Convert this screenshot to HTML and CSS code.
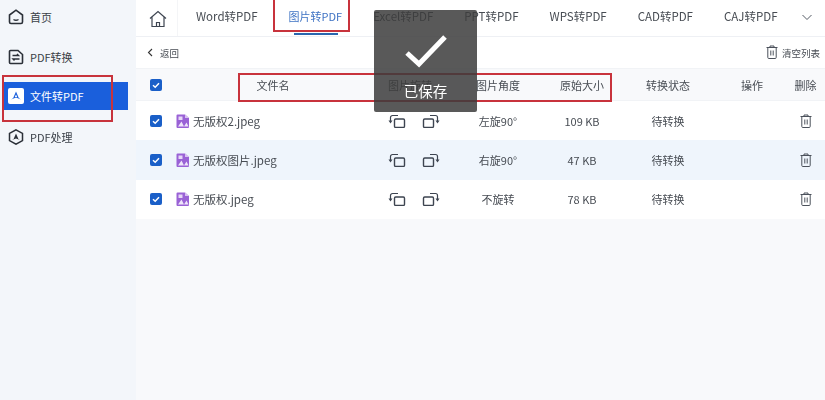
FILE: index.html
```html
<!DOCTYPE html>
<html lang="zh-CN">
  <head>
    <meta charset="UTF-8" />
    <title>文件转PDF</title>
    <link rel="stylesheet" href="styles.css">
  </head>
  <body>
    <svg class="defs" width="0" height="0">
      <symbol id="i-check" viewBox="0 0 12 12">
        <rect width="12" height="12" rx="2" fill="#1a5fc8" />
        <path d="M3 6.2 5.2 8.2 9 4.2" fill="none" stroke="#fff" stroke-width="1.5" />
      </symbol>
      <symbol id="i-file" viewBox="0 0 14 14">
        <path d="M.5 1.500a1 1 0 0 1 1-1H9l4 3.500v9a1 1 0 0 1-1 1H1.500a1 1 0 0 1-1-1z" fill="#9a62d6" />
        <path d="M9 .5V4h4z" fill="#d8c2f0" />
        <rect x="2.500" y="2.500" width="4" height="3.500" fill="#e6d8f6" />
        <path d="M2 12.500 5.500 7.500 8 12.500zM8 12.500l2.500-4 2 4z" fill="#efe6fa" />
      </symbol>
      <symbol id="i-rot-l" viewBox="0 0 18 14">
        <rect x="6.500" y="5" width="10" height="8.500" rx="1.200" fill="none" stroke="#3d4450" stroke-width="1.400" />
        <path d="M10 1.500H4.500a2 2 0 0 0-2 2V8" fill="none" stroke="#3d4450" stroke-width="1.200" />
        <path d="M.5 6.500h4L2.500 9.500z" fill="#3d4450" />
      </symbol>
      <symbol id="i-rot-r" viewBox="0 0 18 14">
        <rect x="1.500" y="5" width="10" height="8.500" rx="1.200" fill="none" stroke="#3d4450" stroke-width="1.400" />
        <path d="M8 1.500h5.500a2 2 0 0 1 2 2V8" fill="none" stroke="#3d4450" stroke-width="1.200" />
        <path d="M13.500 6.500h4l-2 3z" fill="#3d4450" />
      </symbol>
      <symbol id="i-trash" viewBox="0 0 12 14">
        <path d="M.5 2.500h11M4 2.500V1h4v1.500M1.800 2.500v10a1 1 0 0 0 1 1h6.400a1 1 0 0 0 1-1v-10M4.800 5.500v5M7.200 5.500v5" fill="none" stroke="#4b515b" stroke-width="1" />
      </symbol>
    </svg>

    <div class="app">
      <!-- sidebar -->
      <aside class="sidebar">
        <div class="nav-item">
          <svg class="nav-icon" viewBox="0 0 16 16"><path d="M1.500 6 8 1.200 14.500 6v7a1.500 1.500 0 0 1-1.500 1.500H3A1.500 1.500 0 0 1 1.500 13z" fill="none" stroke="#2b3038" stroke-width="1.600" /><path d="M5.500 10.500c1.500 1 3.500 1 5 0" fill="none" stroke="#2b3038" stroke-width="1.400" /></svg>
          <span>首页</span>
        </div>
        <div class="nav-item">
          <svg class="nav-icon" viewBox="0 0 16 16"><path d="M1.500 2.500a1 1 0 0 1 1-1H10l4.500 4v8a1 1 0 0 1-1 1h-11a1 1 0 0 1-1-1z" fill="none" stroke="#2b3038" stroke-width="1.600" /><path d="M4.500 6.500h6l-1.500-1.500M11.500 10h-6.500l1.500 1.500" fill="none" stroke="#2b3038" stroke-width="1.400" /></svg>
          <span>PDF转换</span>
        </div>
        <div class="nav-item active">
          <svg class="nav-icon" viewBox="0 0 16 16"><rect width="16" height="16" rx="2" fill="#fff" /><path d="M8 3.500 5.200 10l-2 1.500 4.800-2 4.800 2-2-1.500zM8 6.500 6.800 9h2.400z" fill="#1a5fdc" fill-rule="evenodd" /></svg>
          <span>文件转PDF</span>
        </div>
        <div class="nav-item">
          <svg class="nav-icon" viewBox="0 0 16 16"><path d="M8 .8 14.500 4.400v7.200L8 15.200 1.500 11.600V4.400z" fill="none" stroke="#2b3038" stroke-width="1.500" /><path d="M8 4.500 5.600 10l-1.600 1 4-1.500 4 1.500-1.600-1z" fill="#2b3038" /></svg>
          <span>PDF处理</span>
        </div>
      </aside>

      <main class="main">
        <!-- top tabs -->
        <nav class="tabs">
          <div class="tab-home">
            <svg width="18" height="18" viewBox="0 0 18 18"><path d="M1 8.500 9 1.500l8 7M3 7v9.500h12V7M7.500 16.500v-4h3v4" fill="none" stroke="#3d4450" stroke-width="1.200" /></svg>
          </div>
          <div class="tab-list">
            <span class="tab">Word转PDF</span>
            <span class="tab current">图片转PDF</span>
            <span class="tab">Excel转PDF</span>
            <span class="tab">PPT转PDF</span>
            <span class="tab">WPS转PDF</span>
            <span class="tab">CAD转PDF</span>
            <span class="tab">CAJ转PDF</span>
            <svg class="tab-more" width="12" height="7" viewBox="0 0 12 7"><path d="M1.500 1 6 5.500 10.500 1" fill="none" stroke="#555b65" stroke-width="1" /></svg>
          </div>
        </nav>

        <div class="toolbar">
          <div class="back">
            <svg width="6" height="9" viewBox="0 0 6 9"><path d="M5 1 1.500 4.500 5 8" fill="none" stroke="#333" stroke-width="1.100" /></svg>
            <span>返回</span>
          </div>
          <div class="clear">
            <svg class="clear-icon" width="12" height="14"><use href="#i-trash" /></svg>
            <span>清空列表</span>
          </div>
        </div>

        <div class="row head">
          <div class="cell"><svg class="check" width="12" height="12"><use href="#i-check" /></svg></div>
          <div class="cell">文件名</div>
          <div class="cell">图片旋转</div>
          <div class="cell">图片角度</div>
          <div class="cell">原始大小</div>
          <div class="cell">转换状态</div>
          <div class="cell">操作</div>
          <div class="cell">删除</div>
        </div>

        <div class="row">
          <div class="cell"><svg class="check" width="12" height="12"><use href="#i-check" /></svg></div>
          <div class="cell file"><svg width="14" height="14"><use href="#i-file" /></svg><span>无版权2.jpeg</span></div>
          <div class="cell rotate"><svg width="18" height="14"><use href="#i-rot-l" /></svg><svg width="18" height="14"><use href="#i-rot-r" /></svg></div>
          <div class="cell">左旋90°</div>
          <div class="cell">109 KB</div>
          <div class="cell">待转换</div>
          <div class="cell"></div>
          <div class="cell"><svg width="12" height="14"><use href="#i-trash" /></svg></div>
        </div>
        <div class="row alt">
          <div class="cell"><svg class="check" width="12" height="12"><use href="#i-check" /></svg></div>
          <div class="cell file"><svg width="14" height="14"><use href="#i-file" /></svg><span>无版权图片.jpeg</span></div>
          <div class="cell rotate"><svg width="18" height="14"><use href="#i-rot-l" /></svg><svg width="18" height="14"><use href="#i-rot-r" /></svg></div>
          <div class="cell">右旋90°</div>
          <div class="cell">47 KB</div>
          <div class="cell">待转换</div>
          <div class="cell"></div>
          <div class="cell"><svg width="12" height="14"><use href="#i-trash" /></svg></div>
        </div>
        <div class="row">
          <div class="cell"><svg class="check" width="12" height="12"><use href="#i-check" /></svg></div>
          <div class="cell file"><svg width="14" height="14"><use href="#i-file" /></svg><span>无版权.jpeg</span></div>
          <div class="cell rotate"><svg width="18" height="14"><use href="#i-rot-l" /></svg><svg width="18" height="14"><use href="#i-rot-r" /></svg></div>
          <div class="cell">不旋转</div>
          <div class="cell">78 KB</div>
          <div class="cell">待转换</div>
          <div class="cell"></div>
          <div class="cell"><svg width="12" height="14"><use href="#i-trash" /></svg></div>
        </div>
      </main>
    </div>

    <!-- red annotation boxes drawn on top of the screenshot -->
    <div class="mark mark-side"></div>
    <div class="mark mark-tab"></div>
    <div class="mark mark-head"></div>

    <div class="toast">
      <svg width="44" height="36" viewBox="0 0 44 36"><path d="M3 20 15 31 41 4" fill="none" stroke="#fff" stroke-width="5" /></svg>
      <span>已保存</span>
    </div>
  </body>
</html>
```

FILE: styles.css
```css
:root {
  --text: #474c53;
  --line: #eef0f4;
  --blue: #1a5fdc;
  --red: #c8333c;
}
body {
  margin: 0;
  width: 825px;
  height: 400px;
  overflow: hidden;
  position: relative;
  font-family: "Noto Sans CJK SC", "Noto Sans", sans-serif;
  font-size: 11px;
  color: var(--text);
  background: #f8f9fb;
}
.defs {
  position: absolute;
}
.app {
  display: flex;
  height: 400px;
  filter: blur(0.4px);
}

/* sidebar */
.sidebar {
  width: 136px;
  flex: none;
  box-sizing: border-box;
  padding-top: 3px;
  background: #f3f6fa;
  display: flex;
  flex-direction: column;
  gap: 12px;
}
.nav-item {
  height: 28px;
  margin: 0 8px 0 2px;
  padding-left: 6px;
  display: flex;
  align-items: center;
  gap: 6px;
  font-size: 11px;
  color: #3a3f47;
}
.nav-item.active {
  background: var(--blue);
  color: #fff;
  margin-top: -1px;
  margin-bottom: 1px;
}
.nav-icon {
  width: 16px;
  height: 16px;
  flex: none;
}

/* main */
.main {
  flex: 1;
  display: flex;
  flex-direction: column;
}
.tabs {
  height: 37px;
  background: #fff;
  border-bottom: 1px solid var(--line);
  box-sizing: border-box;
  display: flex;
}
.tab-home {
  width: 42px;
  flex: none;
  display: flex;
  align-items: center;
  justify-content: center;
  box-sizing: border-box;
  padding: 1px 0 0 2px;
  border-right: 1px solid #f4f5f7;
}
.tab-list {
  display: flex;
  align-items: center;
  gap: 31px;
  padding-left: 18px;
  white-space: nowrap;
  font-size: 11.5px;
  margin-top: -4px;
}
.tab {
  position: relative;
}
.tab.current {
  color: #3f73c4;
  font-size: 11px;
}
.tab.current::after {
  content: "";
  position: absolute;
  left: 5px;
  right: 4px;
  top: 25px;
  height: 2px;
  background: #2a66ae;
}
.tab-more {
  margin-left: -8px;
  margin-top: 2px;
}
.toolbar {
  height: 31px;
  background: #fff;
  display: flex;
  align-items: center;
  justify-content: space-between;
  padding: 0 5px 0 11px;
  font-size: 9.500px;
}
.back,
.clear {
  display: flex;
  align-items: center;
  gap: 7px;
}
.clear {
  gap: 4px;
}
.clear-icon {
  margin-top: -1px;
}

/* table */
.row {
  height: 39.300px;
  background: #fff;
  display: grid;
  grid-template-columns: 40px 194px 80px 96px 72px 100px 68px 39px;
  align-items: center;
  text-align: center;
}
.row.head {
  height: 33px;
  background: #f8f9fb;
  border-top: 1px solid #f1f3f6;
  border-bottom: 1px solid #f1f3f6;
  box-sizing: border-box;
}
.row.alt {
  background: #eff5fc;
}
.cell {
  display: flex;
  align-items: center;
  justify-content: center;
}
.cell.file {
  justify-content: flex-start;
  gap: 3px;
  font-size: 11.5px;
}
.cell.rotate {
  gap: 16px;
  padding-left: 8px;
}
.check {
  margin-left: -1px;
}

/* annotations */
.mark {
  position: absolute;
  box-sizing: border-box;
  border: 2px solid var(--red);
}
.mark-side {
  left: 2px;
  top: 75px;
  width: 111px;
  height: 47px;
}
.mark-tab {
  left: 273px;
  top: -2px;
  width: 77px;
  height: 34px;
}
.mark-head {
  left: 238px;
  top: 73px;
  width: 374px;
  height: 29px;
}
.toast {
  position: absolute;
  left: 374px;
  top: 10px;
  width: 103px;
  height: 102px;
  box-sizing: border-box;
  padding-top: 23px;
  border-radius: 2px;
  background: rgba(60, 60, 60, 0.85);
  color: #fff;
  font-size: 14.500px;
  display: flex;
  flex-direction: column;
  align-items: center;
  gap: 11px;
}
```
